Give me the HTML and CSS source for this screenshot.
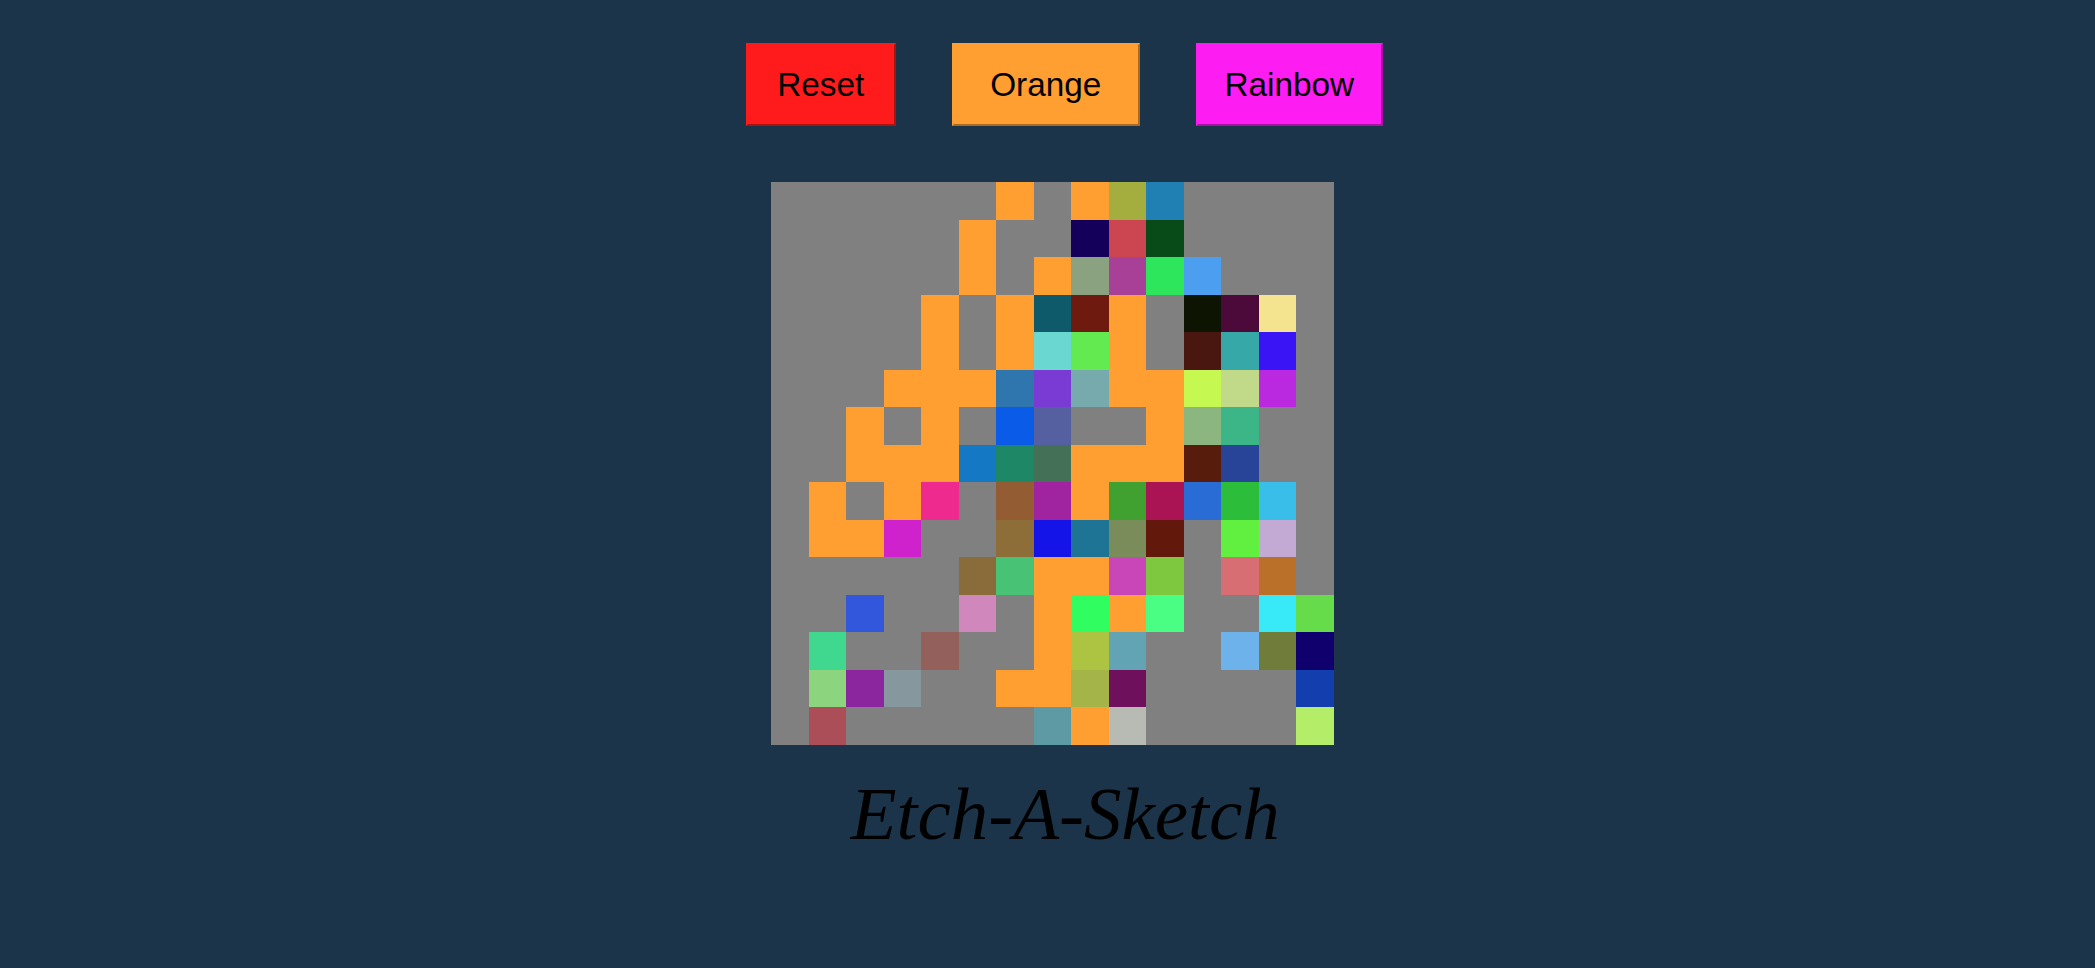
FILE: index.html
```html
<!doctype html>
<html>
  <head>
    <meta http-equiv="Content-type" content="text/html; charset=utf-8">
    <title>Etch-A-Sketch</title>
    <link rel="stylesheet" href="styles.css">
  </head>
  <body>

    <section class="controls">
      <button id="reset" class="btn btn-reset">Reset</button>
      <button id="orange" class="btn btn-orange">Orange</button>
      <button id="rainbow" class="btn btn-rainbow">Rainbow</button>
    </section>

    <section class="board">
      <div id="grid" class="grid"></div>
    </section>

    <header class="title"><h1>Etch-A-Sketch</h1></header>

    <script type="text/javascript">
      var grid   = document.getElementById('grid'),
          g      = '#808080',
          o      = '#ff9f32',
          cells  = [
            [g,g,g,g,g,g,o,g,o,'#a4ae3e','#2080b4',g,g,g,g],
            [g,g,g,g,g,o,g,g,'#14005a','#cc4652','#084a18',g,g,g,g],
            [g,g,g,g,g,o,g,o,'#8aa280','#a84098','#2ee65c','#4c9ef0',g,g,g],
            [g,g,g,g,o,g,o,'#0f5a6a','#6e1a0e',o,g,'#0e1402','#4c0a3a','#f4e490',g],
            [g,g,g,g,o,g,o,'#6ad8d0','#62ea50',o,g,'#4a1610','#36a8a8','#3a14f4',g],
            [g,g,g,o,o,o,'#2e76ad','#7a3ad4','#76aaac',o,o,'#c6f852','#c0da8a','#ba28e0',g],
            [g,g,o,g,o,g,'#0a5ce8','#5560a0',g,g,o,'#8cb680','#3cb686',g,g],
            [g,g,o,o,o,'#1478c4','#1e8866','#447058',o,o,o,'#581c0c','#284498',g,g],
            [g,o,g,o,'#ee2a8e',g,'#945c32','#a024a0',o,'#40a030','#aa1454','#2a6cd6','#2cbe3a','#38bee8',g],
            [g,o,o,'#d022cc',g,g,'#8e6e38','#1414e8','#1e7494','#7a8c5a','#62180a',g,'#62f040','#c2aad4',g],
            [g,g,g,g,g,'#8a6c3a','#48c274',o,o,'#c846b8','#7ec840',g,'#d66e74','#ba7028',g],
            [g,g,'#3256dc',g,g,'#d088bc',g,o,'#30fe60',o,'#4afe84',g,g,'#38eaf8','#66dc4a'],
            [g,'#40d88e',g,g,'#94605c',g,g,o,'#acc442','#62a4b4',g,g,'#6eb2ec','#707c3a','#10006e'],
            [g,'#8cd47e','#8c269e','#86989e',g,g,o,o,'#a4b448','#6e105c',g,g,g,g,'#123eae'],
            [g,'#ac4e58',g,g,g,g,g,'#5e9aa4',o,'#b8bab4',g,g,g,g,'#b4ee68']
          ];

      cells.forEach(function(row) {
        row.forEach(function(color) {
          var cell = document.createElement('div');
          cell.className = 'cell';
          cell.style.backgroundColor = color;
          grid.appendChild(cell);
        });
      });
    </script>
  </body>
</html>
```

FILE: styles.css
```css
html, body {
  margin: 0;
  padding: 0;
}

body {
  background: #1b3449;
  padding-top: 43px;
  font-family: "Liberation Sans", Arial, sans-serif;
}

.controls {
  display: flex;
  justify-content: center;
  gap: 56px;
  padding-left: 33.5px;
}

.btn {
  height: 83px;
  padding: 0;
  font-family: inherit;
  font-size: 33.3px;
  color: #000;
  border-width: 2px;
  border-style: outset;
  cursor: pointer;
}

.btn-reset {
  width: 150px;
  background: #ff1b1b;
  border-color: #ff1b1b;
}

.btn-orange {
  width: 188px;
  background: #ff9f32;
  border-color: #ff9f32;
}

.btn-rainbow {
  width: 187px;
  background: #fd1cf2;
  border-color: #fd1cf2;
}

.board {
  display: flex;
  justify-content: center;
  margin-top: 56px;
  padding-left: 9.5px;
}

.grid {
  width: 562.5px;
  height: 562.5px;
  display: grid;
  grid-template-columns: repeat(15, 1fr);
  grid-template-rows: repeat(15, 1fr);
  background: #808080;
}

.title {
  text-align: center;
  margin-top: 31px;
  padding-left: 35.5px;
}

.title h1 {
  margin: 0;
  font-family: "Liberation Serif", "Times New Roman", serif;
  font-style: italic;
  font-weight: normal;
  font-size: 75px;
  line-height: 1;
  color: #000;
}
```
